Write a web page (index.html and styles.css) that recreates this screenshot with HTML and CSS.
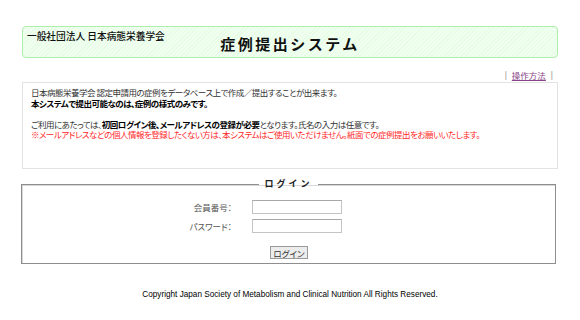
FILE: index.html
```html
<!DOCTYPE html>
<html lang="ja">
<head>
<meta charset="utf-8">
<title>症例提出システム</title>
<link rel="stylesheet" href="styles.css">
</head>
<body>
<div class="page">
  <div class="header">
    <div class="org">一般社団法人 日本病態栄養学会</div>
    <h1 class="title">症例提出システム</h1>
  </div>
  <div class="links">
    <span class="sep">|</span><a class="link" href="#">操作方法</a><span class="sep">|</span>
  </div>
  <div class="info">
    <p class="line">日本病態栄養学会 認定申請用の症例をデータベース上で作成／提出することが出来ます。</p>
    <p class="line strong">本システムで提出可能なのは、症例の様式のみです。</p>
    <p class="line gap">ご利用にあたっては、<b class="em">初回ログイン後、メールアドレスの登録が必要</b>となります。氏名の入力は任意です。</p>
    <p class="line warn">※メールアドレスなどの個人情報を登録したくない方は、本システムはご使用いただけません。紙面での症例提出をお願いいたします。</p>
  </div>
  <fieldset class="login">
    <legend class="legend">ログイン</legend>
    <div class="form">
      <label class="label" for="id">会員番号：</label>
      <input class="field" id="id" type="text">
      <label class="label" for="pw">パスワード：</label>
      <input class="field" id="pw" type="password">
    </div>
    <div class="actions"><button class="btn" type="button">ログイン</button></div>
  </fieldset>
  <p class="footer">Copyright Japan Society of Metabolism and Clinical Nutrition All Rights Reserved.</p>
</div>
</body>
</html>
```
FILE: styles.css
```css
html, body {
  margin: 0;
  padding: 0;
  background: #fff;
}
body {
  font-family: "Noto Sans CJK JP", "Noto Sans", sans-serif;
  color: #333;
  font-size: 8.5px;
  font-feature-settings: "palt";
}
.page {
  width: 536px;
  margin: 0 auto;
  padding-top: 26px;
}
.header {
  height: 30px;
  border: 1px solid #acefac;
  border-radius: 4px;
  background: repeating-linear-gradient(135deg, #e4fde4 0, #e4fde4 1px, #f0fff0 1px, #f0fff0 3px);
  display: grid;
}
.org, .title {
  grid-area: 1 / 1;
}
.org {
  justify-self: start;
  align-self: start;
  margin: 3px 0 0 4px;
  font-size: 9.7px;
  line-height: 12px;
  color: #111;
  font-weight: 500;
  font-feature-settings: normal;
}
.title {
  justify-self: center;
  align-self: start;
  margin: 9px 0 0 0;
  font-size: 15px;
  line-height: 16px;
  font-weight: bold;
  letter-spacing: 2.5px;
  color: #111;
  font-feature-settings: normal;
}
.links {
  display: flex;
  justify-content: flex-end;
  align-items: center;
  gap: 5px;
  padding: 10px 5px 0 0;
  height: 14px;
  line-height: 14px;
}
.sep {
  color: #666;
  font-size: 8px;
}
.link {
  color: #884488;
  text-decoration: underline;
  font-size: 8.5px;
}
.info {
  height: 81px;
  border: 1px solid #e3e3e3;
  padding: 4px 8px 0 8px;
}
.line {
  margin: 0;
  line-height: 10.5px;
  letter-spacing: -0.5px;
}
.strong {
  font-weight: bold;
  color: #000;
}
.gap {
  margin-top: 10.5px;
}
.em {
  color: #000;
}
.warn {
  color: #ff2a2a;
}
.login {
  margin: 9px 0 0 -1px;
  width: 535px;
  box-sizing: border-box;
  border: 1px solid #8e8e8e;
  box-shadow: inset 1px 1px 0 #d8d8d8;
  padding: 10px 0 0 0;
  height: 86px;
}
.legend {
  margin: 0 auto;
  padding: 0 5px;
  font-weight: bold;
  letter-spacing: 3px;
  font-size: 9px;
  color: #222;
  line-height: 12px;
  font-feature-settings: normal;
}
.form {
  display: grid;
  grid-template-columns: 210px 90px;
  column-gap: 20px;
  row-gap: 5px;
  align-items: center;
}
.label {
  justify-self: end;
  color: #555;
  font-size: 8.5px;
}
.field {
  width: 90px;
  height: 14px;
  box-sizing: border-box;
  border: 1px solid #c4c4c4;
  border-top-color: #a8a8a8;
  margin: 0;
  padding: 0;
}
.actions {
  display: flex;
  justify-content: center;
  margin-top: 13px;
}
.btn {
  font-family: "Noto Sans CJK JP", sans-serif;
  font-size: 8.5px;
  font-feature-settings: "palt";
  line-height: 10px;
  height: 13px;
  padding: 0 2px;
  border: 1px solid #9a9a9a;
  background: #ececec;
  color: #333;
  margin-left: 1px;
}
.footer {
  margin: 26px 0 0 0;
  text-align: center;
  font-family: "Liberation Sans", Arial, sans-serif;
  font-size: 8.2px;
  color: #000;
  font-feature-settings: normal;
}
```
